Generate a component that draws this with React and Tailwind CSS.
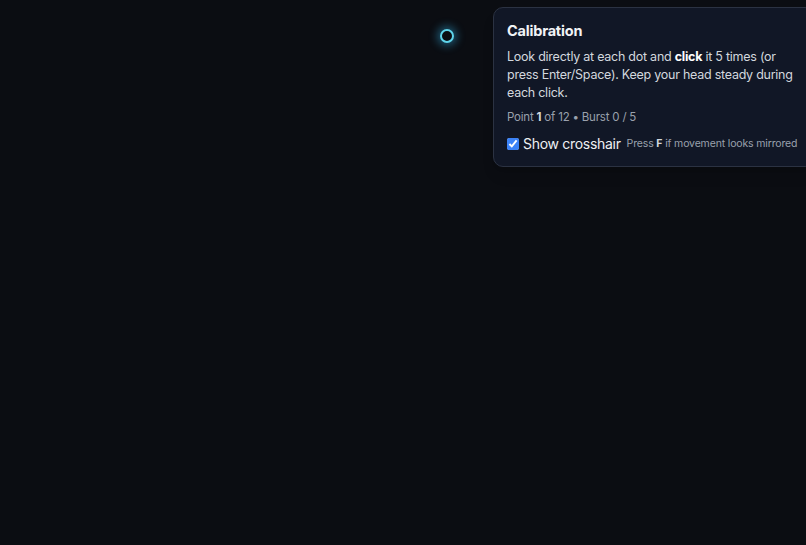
import React, { useState } from "react";

const CalibrationDot = () => (
  <div className="absolute left-[440px] top-[29px] w-[14px] h-[14px] rounded-full border-2 border-[#5fd4ea] bg-[#0b0d12] shadow-[0_0_8px_3px_rgba(56,189,248,0.4)]" />
);

const CalibrationPanel = () => {
  const [crosshair, setCrosshair] = useState(true);

  return (
    <div className="absolute left-[493px] top-[7px] w-[322px] rounded-[10px] border border-[#2b3242] bg-[#111726] px-[13px] pt-[13px] pb-[12px] text-[#e5e7eb] shadow-lg">
      <h2 className="text-[14.5px] font-bold leading-5 tracking-[-0.2px] text-[#f1f3f6]">Calibration</h2>
      <p className="mt-[7px] text-[12.5px] leading-[18px] tracking-[-0.25px] text-[#d3d7de]">
        Look directly at each dot and <b className="font-bold text-white">click</b> it 5 times (or
        press Enter/Space). Keep your head steady during each click.
      </p>
      <p className="mt-[7px] text-[11.5px] leading-[16px] tracking-[-0.2px] text-[#9aa1ad]">
        Point <b className="font-bold text-[#d3d7de]">1</b> of 12 • Burst 0 / 5
      </p>
      <div className="mt-[9px] flex items-center gap-[6px] whitespace-nowrap">
        <label className="flex items-center gap-[4px] text-[14px] leading-5 tracking-[-0.3px] text-[#eef0f3]">
          <input
            type="checkbox"
            checked={crosshair}
            onChange={(e) => setCrosshair(e.target.checked)}
            className="h-[12px] w-[12px] accent-[#3b82f6]"
          />
          Show crosshair
        </label>
        <span className="text-[10.5px] leading-4 tracking-[-0.15px] text-[#9aa1ad]">
          Press <b className="font-bold text-[#d3d7de]">F</b> if movement looks mirrored
        </span>
      </div>
    </div>
  );
};

export default function App() {
  return (
    <div className="relative h-[545px] w-full overflow-hidden bg-[#0b0d12] font-['Inter',sans-serif]">
      <CalibrationDot />
      <CalibrationPanel />
    </div>
  );
}
